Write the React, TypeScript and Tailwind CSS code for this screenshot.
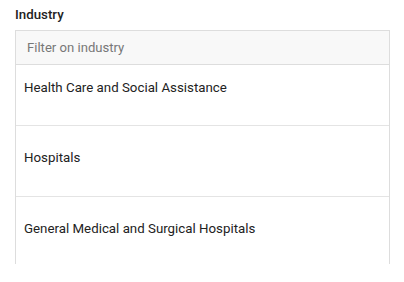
export default function App() {
  const rows = [
    { label: "Health Care and Social Assistance", cls: "h-[61px] pt-[14px]" },
    { label: "Hospitals", cls: "h-[71px] pt-[23px]" },
    { label: "General Medical and Surgical Hospitals", cls: "h-[71px] pt-[23px]" },
  ];
  return (
    <div className="w-[404px] h-[282px] bg-white overflow-hidden" style={{ fontFamily: "Roboto, 'Noto Sans', sans-serif" }}>
      <div className="pl-[15px] pr-[14px] pt-[6px]">
        <div className="text-[13.3px] leading-[18px] font-medium text-[#222] mb-[6px]">Industry</div>
        <div className="h-[234px] overflow-hidden border-x border-t border-[#dddddd]">
          <div className="h-[34px] bg-[#f8f8f8] border-b border-[#dddddd] flex items-center pl-[11px] text-[13.1px] text-[#777]">
            Filter on industry
          </div>
          {rows.map((r) => (
            <div key={r.label} className={`${r.cls} border-b border-[#e4e4e4] pl-[8px] text-[13.3px] leading-[18px] text-[#222]`}>
              {r.label}
            </div>
          ))}
        </div>
      </div>
    </div>
  );
}
